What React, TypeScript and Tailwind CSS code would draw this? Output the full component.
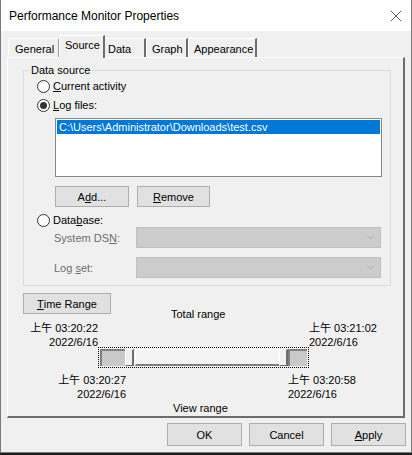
import { X, ChevronDown } from 'lucide-react';

const FONT = "font-['Liberation_Sans','Noto_Sans_CJK_SC',sans-serif]";

function Radio({ checked, children }: { checked?: boolean; children: React.ReactNode }) {
    return (
        <div className="flex items-center h-[14px]">
            <span className="w-[13px] h-[13px] rounded-full border border-[#333] bg-white flex items-center justify-center shrink-0">
                {checked && <span className="w-[7px] h-[7px] rounded-full bg-[#333]" />}
            </span>
            <span className="ml-[3px]">{children}</span>
        </div>
    );
}

function Btn({ children, className = '' }: { children: React.ReactNode; className?: string }) {
    return (
        <div className={`h-[21px] bg-[#e1e1e1] border border-[#adadad] flex items-center justify-center ${className}`}>
            {children}
        </div>
    );
}

function Combo() {
    return (
        <div className="w-[245px] h-[21px] bg-[#cccccc] border border-[#bfbfbf] flex items-center justify-end pr-[4px]">
            <ChevronDown className="w-[11px] h-[11px] text-[#9a9a9a]" strokeWidth={1.5} />
        </div>
    );
}

function Thumb() {
    return (
        <div className="w-[9px] h-full bg-[#f0f0f0] border-l border-t border-white border-r-2 border-b border-r-[#6d6d6d] border-b-[#6d6d6d]" />
    );
}

export default function App() {
    return (
        <div className={`${FONT} text-[11px] leading-[14px] text-black w-[412px] h-[455px] bg-[#1c1c1c] overflow-hidden`}>
            <div className="w-[412px] h-[453px] bg-[#f0f0f0] border-l border-r border-b border-[#7a7a7a] flex flex-col">
                {/* title bar */}
                <div className="h-[31px] bg-white flex items-center justify-between pl-[8px] pr-[5px]">
                    <span className="text-[12px]">Performance Monitor Properties</span>
                    <X className="w-[20px] h-[20px]" strokeWidth={0.75} />
                </div>

                <div className="pt-[4px] pl-[6px] pr-[5px]">
                    {/* tabs */}
                    <div className="flex items-end h-[22px] relative z-10">
                        <div className="h-[19px] px-[6px] pt-[3px] border-l border-t border-white border-r border-r-[#a0a0a0] w-[51px] ml-[1px]">General</div>
                        <div className="h-[23px] w-[46px] px-[5px] pt-[2px] bg-[#f0f0f0] border-l border-t border-white border-r-2 border-r-[#6d6d6d] -mb-[1px]">Source</div>
                        <div className="h-[19px] w-[41px] pl-[3px] pt-[3px] border-t border-white border-r-2 border-r-[#6d6d6d]">Data</div>
                        <div className="h-[19px] w-[42px] pl-[5px] pt-[3px] border-l border-t border-white border-r-2 border-r-[#6d6d6d]">Graph</div>
                        <div className="h-[19px] w-[69px] pl-[5px] pt-[3px] border-l border-t border-white border-r-2 border-r-[#6d6d6d]">Appearance</div>
                    </div>

                    {/* tab panel */}
                    <div className="w-[398px] h-[361px] border-l border-t border-white border-r-2 border-b-2 border-r-[#6d6d6d] border-b-[#6d6d6d] pl-[15px] pt-[12px]">
                        {/* group box */}
                        <div className="w-[368px] h-[216px] border border-[#dcdcdc] relative pl-[13px] pt-[8px]">
                            <span className="absolute -top-[8px] left-[6px] bg-[#f0f0f0] px-[1px]">Data source</span>
                            <Radio><span className="underline underline-offset-1">C</span>urrent activity</Radio>
                            <div className="mt-[5px]">
                                <Radio checked><span className="underline underline-offset-1">L</span>og files:</Radio>
                            </div>
                            <div className="ml-[18px] mt-[6px] w-[327px] h-[59px] bg-white border border-[#828790] p-[1px]">
                                <div className="h-[14px] bg-[#0078d7] text-white pl-[2px] leading-[14px]">C:\Users\Administrator\Downloads\test.csv</div>
                            </div>
                            <div className="ml-[18px] mt-[9px] flex gap-[8px]">
                                <Btn className="w-[74px]">A<span className="underline">d</span>d...</Btn>
                                <Btn className="w-[73px]"><span className="underline">R</span>emove</Btn>
                            </div>
                            <div className="mt-[6px]">
                                <Radio>Data<span className="underline underline-offset-1">b</span>ase:</Radio>
                            </div>
                            <div className="ml-[17px] flex items-center text-[#6d6d6d]">
                                <span className="w-[82px]">System DS<span className="underline">N</span>:</span>
                                <Combo />
                            </div>
                            <div className="ml-[17px] mt-[9px] flex items-center text-[#6d6d6d]">
                                <span className="w-[82px]">Log <span className="underline">s</span>et:</span>
                                <Combo />
                            </div>
                        </div>

                        {/* time range */}
                        <div className="mt-[7px] flex items-start">
                            <Btn className="w-[88px]"><span className="underline">T</span>ime Range</Btn>
                            <span className="ml-[60px] mt-[14px]">Total range</span>
                        </div>
                        <div className="flex">
                            <div className="w-[75px] flex flex-col items-end">
                                <span>上午 03:20:22</span>
                                <span>2022/6/16</span>
                            </div>
                            <div className="w-[211px]" />
                            <div className="flex flex-col items-start">
                                <span>上午 03:21:02</span>
                                <span>2022/6/16</span>
                            </div>
                        </div>
                        <div className="ml-[75px] -mt-[2px] w-[211px] h-[21px] border border-dotted border-black p-[1px]">
                            <div className="flex h-full">
                                <div className="w-[25px] bg-[#c9c9c9] border-t-2 border-l-2 border-[#7e7e7e]" />
                                <Thumb />
                                <div className="flex-1 bg-[#f4f4f4] border-l border-t border-white border-b-2 border-b-[#7e7e7e] ml-[1px]" />
                                <Thumb />
                                <div className="w-[19px] bg-[#c9c9c9] border-t-2 border-l-2 border-[#7e7e7e]" />
                            </div>
                        </div>
                        <div className="flex mt-[5px]">
                            <div className="w-[103px] flex flex-col items-end">
                                <span>上午 03:20:27</span>
                                <span>2022/6/16</span>
                            </div>
                            <div className="w-[162px]" />
                            <div className="flex flex-col items-start">
                                <span>上午 03:20:58</span>
                                <span>2022/6/16</span>
                            </div>
                        </div>
                        <div className="ml-[150px]">View range</div>
                    </div>

                    {/* dialog buttons */}
                    <div className="flex justify-end gap-[7px] mt-[5px]">
                        <div className="w-[75px] h-[23px] bg-[#e1e1e1] border border-[#adadad] flex items-center justify-center">OK</div>
                        <div className="w-[75px] h-[23px] bg-[#e1e1e1] border border-[#adadad] flex items-center justify-center">Cancel</div>
                        <div className="w-[75px] h-[23px] bg-[#e1e1e1] border border-[#adadad] flex items-center justify-center"><span className="underline">A</span>pply</div>
                    </div>
                </div>
            </div>
        </div>
    );
}
